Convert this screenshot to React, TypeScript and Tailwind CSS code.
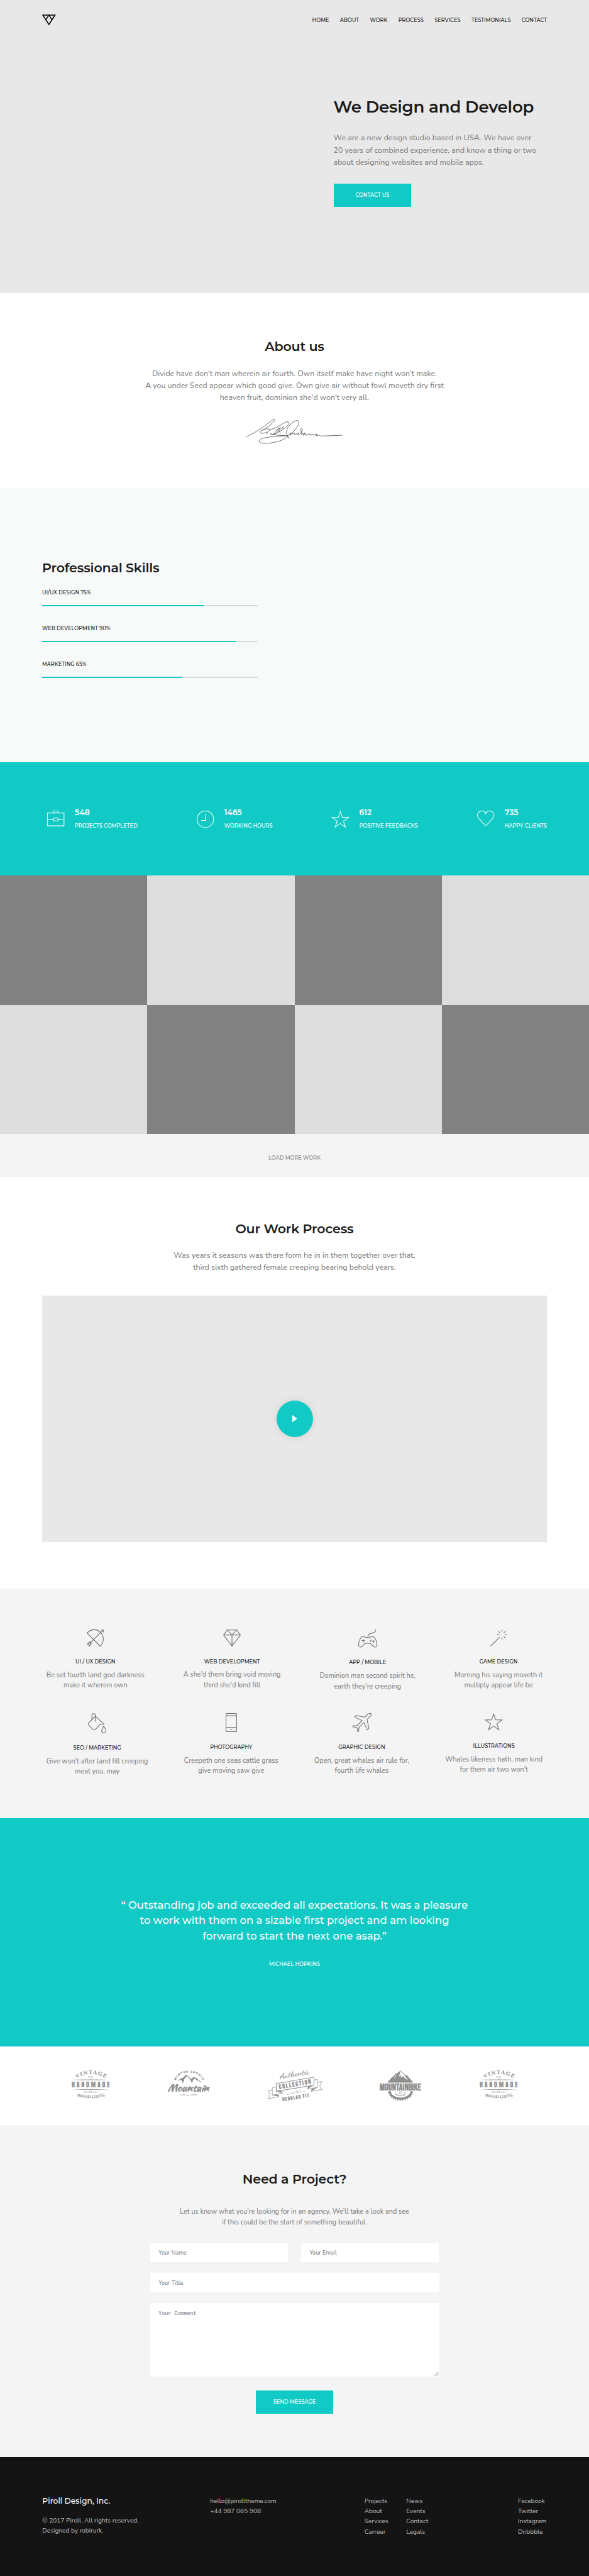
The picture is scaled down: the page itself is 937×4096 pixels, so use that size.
import type { ReactNode } from "react";

const HEADING = "font-['Montserrat','Inter',sans-serif] font-semibold tracking-[-0.008em] text-[#1b1b1b]";
const LABEL = "font-['Montserrat','Inter',sans-serif] font-medium text-[8.23px] leading-[12px]";
const LEAD = "font-['Nunito','Lato',sans-serif] text-[12.35px] leading-[19.2px] text-[#787878]";

type IconProps = { w: number; h: number; box: string; stroke: number; children: ReactNode };

function Icon({ w, h, box, stroke, children }: IconProps) {
  return (
    <svg width={w} height={h} viewBox={box} fill="none" stroke="currentColor" strokeWidth={stroke} className="block shrink-0 overflow-visible">
      {children}
    </svg>
  );
}

const STAR = "M63 6 49 47H5L41 74 27 116 63 90 99 116 85 74 121 47H77Z";

function Logo() {
  return (
    <svg width="21.6" height="17.3" viewBox="0 0 32 25.5" fill="none" stroke="#000" strokeWidth="2.3" className="block">
      <path d="M1.6 1.3H30.4L16 23.6Z" />
      <path d="M16 1.3 8.7 12.4M16 1.3 23.3 12.4" />
    </svg>
  );
}

function Header() {
  const links = ["HOME", "ABOUT", "WORK", "PROCESS", "SERVICES", "TESTIMONIALS", "CONTACT"];
  return (
    <header className="flex h-[16px] items-center justify-between">
      <Logo />
      <nav className="flex gap-[17.3px]">
        {links.map((l) => (
          <a key={l} className={`${LABEL} text-[#1b1b1b]`}>{l}</a>
        ))}
      </nav>
    </header>
  );
}

function Hero() {
  return (
    <section className="h-[465.8px] bg-[#e8e8e8] px-[67px] pt-6">
      <Header />
      <div className="mt-[111.7px] ml-[463.6px]">
        <h1 className={`${HEADING} text-[26.07px] leading-[36px] whitespace-nowrap`}>We Design and Develop</h1>
        <p className={`${LEAD} mt-[22.7px] whitespace-nowrap`}>
          We are a new design studio based in USA. We have over<br />
          20 years of combined experience, and know a thing or two<br />
          about designing websites and mobile apps.
        </p>
        <button className={`${LABEL} mt-[23.6px] flex h-[37.2px] w-[123.6px] items-center justify-center bg-[#11cac5] text-white`}>CONTACT US</button>
      </div>
    </section>
  );
}

function Signature() {
  return (
    <svg width="152.3" height="39.6" viewBox="25 33 665 173" fill="none" stroke="#2b2b2b" strokeWidth="3" strokeLinecap="round" strokeLinejoin="round" className="mt-[23.8px] block">
      <path d="M25 157C70 135 100 118 132 97C165 72 195 48 212 38C226 32 226 42 214 53C190 78 160 100 138 110C112 122 118 136 138 133C164 130 190 118 187 108C182 99 150 102 138 112" />
      <path d="M186 108C220 104 255 82 285 62C310 48 325 52 320 65C310 88 270 118 232 134C216 141 205 142 193 137" />
      <path d="M172 128 166 138M262 92C245 105 225 122 212 139M232 112C246 98 262 96 256 106C248 120 232 132 222 138M284 84C272 96 262 112 246 124M276 98 284 94M262 133 257 138" />
      <path d="M193 137C230 152 280 146 316 152C290 180 230 200 160 203C110 205 100 187 130 172C170 156 250 152 300 151" />
      <path d="M322 170C312 155 300 140 305 112C312 80 350 50 375 44C395 42 392 65 380 85C362 115 335 142 308 150" />
      <path d="M325 138C335 128 345 130 338 142C332 150 322 146 330 136M342 136C350 133 356 131 362 131C352 142 360 147 370 140C376 133 384 130 390 132C380 138 376 146 386 145C398 140 410 122 414 108C414 98 403 98 403 108C404 124 412 134 408 145C414 134 428 128 432 134C422 136 414 146 422 148C430 146 436 138 436 134C434 144 436 148 444 146L462 136 466 147 484 138 490 147 516 138 508 149 528 146C532 153 545 152 560 152L690 147" />
    </svg>
  );
}

function About() {
  return (
    <section className="flex h-[310px] flex-col items-center bg-white pt-[71.2px] text-center">
      <h2 className={`${HEADING} text-[20.58px] leading-[28px]`}>About us</h2>
      <p className={`${LEAD} mt-[19.9px]`}>
        Divide have don't man wherein air fourth. Own itself make have night won't make.<br />
        A you under Seed appear which good give. Own give air without fowl moveth dry first<br />
        heaven fruit, dominion she'd won't very all.
      </p>
      <Signature />
    </section>
  );
}

function Skills() {
  const skills = [
    { label: "UI/UX DESIGN", value: 75 },
    { label: "WEB DEVELOPMENT", value: 90 },
    { label: "MARKETING", value: 65 },
  ];
  return (
    <section className="h-[436.3px] bg-[#f8faf9] px-[67px] pt-[112.9px]">
      <h2 className={`${HEADING} text-[20.58px] leading-[28px]`}>Professional Skills</h2>
      <div className="mt-[19.4px] flex w-[343px] flex-col gap-[28.8px]">
        {skills.map((s) => (
          <div key={s.label}>
            <div className={`${LABEL} text-[#1b1b1b]`}>{`${s.label} ${s.value}%`}</div>
            <div className="mt-[14px] h-[2.1px] bg-[#d8dad9]">
              <div className="h-full bg-[#11cac5]" style={{ width: `${s.value}%` }} />
            </div>
          </div>
        ))}
      </div>
    </section>
  );
}

function Stats() {
  const stats = [
    {
      n: "548", label: "PROJECTS COMPLETED",
      icon: (
        <Icon w={27.4} h={24.7} box="0 0 40 36" stroke={1.5}>
          <path d="M.8 5.6H39.2V35.2H.8ZM14.8 5.6V.8H25.2V5.6M.8 20.3H14.8M25.2 20.3H39.2M14.8 17.2H25.2V23.6H14.8Z" />
        </Icon>
      ),
    },
    {
      n: "1465", label: "WORKING HOURS",
      icon: (
        <Icon w={27.4} h={27.4} box="0 0 40 40" stroke={1.5}>
          <circle cx="20" cy="20" r="19.2" />
          <path d="M20.6 7V22.6H10.5" />
        </Icon>
      ),
    },
    { n: "612", label: "POSITIVE FEEDBACKS", icon: <Icon w={28.8} h={27.4} box="0 2 126 118" stroke={4.5}><path d={STAR} /></Icon> },
    {
      n: "735", label: "HAPPY CLIENTS",
      icon: (
        <Icon w={27.4} h={24.7} box="0 0 40 36" stroke={1.5}>
          <path d="M20 35 4 18.5C-2 12 1 .8 11 .8C16 .8 19 4 20 7C21 4 24 .8 29 .8C39 .8 42 12 36 18.5Z" />
        </Icon>
      ),
    },
  ];
  return (
    <section className="flex h-[179.8px] justify-between bg-[#11cac5] px-[67px] pt-[71.5px] text-white">
      {stats.map((s) => (
        <div key={s.label} className="flex items-start gap-[9px]">
          <div className="mt-[5.4px] flex w-[43px] justify-center">{s.icon}</div>
          <div className="font-['Montserrat','Inter',sans-serif] font-semibold">
            <div className="text-[12.35px] leading-[15px]">{s.n}</div>
            <div className={`${LABEL} mt-[8.2px]`}>{s.label}</div>
          </div>
        </div>
      ))}
    </section>
  );
}

function Work() {
  const dark = [true, false, true, false, false, true, false, true];
  return (
    <section>
      <div className="grid grid-cols-4">
        {dark.map((d, i) => (
          <div key={i} className={d ? "h-[205.75px] bg-[#828282]" : "h-[205.75px] bg-[#dddddd]"} />
        ))}
      </div>
      <div className="flex h-[68.6px] items-center justify-center bg-[#f4f4f4] pt-[6px]">
        <a className={`${LABEL} text-[#8a8a8a]`}>LOAD MORE WORK</a>
      </div>
    </section>
  );
}

function Process() {
  return (
    <section className="h-[653.8px] bg-white px-[67px] pt-[67.9px] text-center">
      <h2 className={`${HEADING} text-[20.58px] leading-[28px]`}>Our Work Process</h2>
      <p className={`${LEAD} mt-[19.4px]`}>
        Was years it seasons was there form he in in them together over that,<br />
        third sixth gathered female creeping bearing behold years.
      </p>
      <div className="mt-[34.4px] flex h-[391.7px] items-center justify-center bg-[#e8e8e8]">
        <button className="flex size-[58px] items-center justify-center rounded-full bg-[#11cac5] shadow-[0_0_14px_rgba(0,0,0,0.1)]">
          <svg width="7.8" height="11.6" viewBox="0 0 8 12" fill="#fff" className="block"><path d="M0 0 8 6 0 12Z" /></svg>
        </button>
      </div>
    </section>
  );
}

type Service = { title: string; lines: [string, string]; icon: ReactNode; iconBox: string };

const SERVICES: Service[][] = [
  [
    {
      title: "UI / UX DESIGN", lines: ["Be set fourth land god darkness", "make it wherein own"], iconBox: "h-[45px]",
      icon: (
        <Icon w={27} h={27.4} box="0 0 39.5 40" stroke={1.5}>
          <path d="M.8 8.2C12-3 25-.5 32 6.5C39.500 14 42 27 31.500 39Z" />
          <path d="M7.500 32 38.500 .9M33 .9H38.500V6.600M7.500 32V28.200L1 34H5.600V38.800L11 32.300H7.500" />
        </Icon>
      ),
    },
    {
      title: "WEB DEVELOPMENT", lines: ["A she'd them bring void moving", "third she'd kind fill"], iconBox: "h-[44.6px]",
      icon: (
        <Icon w={28.1} h={26.8} box="0 0 41 39" stroke={1.5}>
          <path d="M9.500 1H31.500L40 12.700 20.500 38 1 12.700ZM1 12.700H40M10 1 20.500 12.700 31 1M20.500 12.700V38" />
        </Icon>
      ),
    },
    {
      title: "APP / MOBILE", lines: ["Dominion man second spirit he,", "earth they're creeping"], iconBox: "h-[46.5px]",
      icon: (
        <Icon w={30.2} h={28.6} box="0 0 132 125" stroke={4.4}>
          <path d="M66 58C52 58 48 49 35 49C14 49 2 84 2 108C2 118 8 123 16 122C32 121 38 96 54 96H78C94 96 100 121 116 122C126 123 130 118 130 108C130 84 118 49 97 49C84 49 80 58 66 58Z" />
          <path d="M66 57C66 38 74 29 88 27C108 25 120 20 121 1M35 66V90M23 78H47" />
          <circle cx="87" cy="78" r="5" />
          <circle cx="106" cy="83" r="5" />
        </Icon>
      ),
    },
    {
      title: "GAME DESIGN", lines: ["Morning his saying moveth it", "multiply appear life be"], iconBox: "h-[45px]",
      icon: (
        <Icon w={27} h={27} box="0 0 118 118" stroke={4.4}>
          <path d="M2 115 64 54M81 0V19M81 53V72M45 36H64M99 36H117M55 10 68 24M107 10 94 24M94 49 107 62" />
        </Icon>
      ),
    },
  ],
  [
    {
      title: "SEO / MARKETING", lines: ["Give won't after land fill creeping", "meat you, may"], iconBox: "h-[49.1px]",
      icon: (
        <Icon w={29.5} h={31.2} box="0 0 43 45.5" stroke={1.5}>
          <path d="M17 7 37 25.500H29L17.500 37.500C15.500 39.400 12.700 39.400 10.700 37.500L2.500 28.500C.5 26.500 .5 23.800 2.500 21.800Z" />
          <path d="M9 15V5A4 4 0 0 1 17 5V20M36.500 30C33 36 31.500 38.500 31.500 40.500A5 4.500 0 0 0 41.500 40.500C41.500 38.500 40 36 36.500 30Z" />
        </Icon>
      ),
    },
    {
      title: "PHOTOGRAPHY", lines: ["Creepeth one seas cattle grass", "give moving saw give"], iconBox: "h-[48.1px]",
      icon: (
        <Icon w={17.8} h={30.2} box="0 0 26 44" stroke={1.5}>
          <rect x=".8" y=".8" width="24.4" height="42.4" rx="1" />
          <path d="M.8 5.800H25.200M.8 33.200H25.200M11 38H15" />
        </Icon>
      ),
    },
    {
      title: "GRAPHIC DESIGN", lines: ["Open, great whales air rule for,", "fourth life whales"], iconBox: "h-[48.1px]",
      icon: (
        <Icon w={29.7} h={29.7} box="0 0 130 130" stroke={4.4}>
          <path d="M24 16 86 28 108 6C116-1 126 0 128 3C131 8 129 14 124 20L100 44 113 106 102 117 78 66 44 98 42 127 36 129 31 101 1 95 4 88 32 86 65 52 14 27Z" />
        </Icon>
      ),
    },
    {
      title: "ILLUSTRATIONS", lines: ["Whales likeness hath, man kind", "for them air two won't"], iconBox: "h-[46px]",
      icon: <Icon w={28.8} h={27} box="0 0 126 118" stroke={4.4}><path d={STAR} /></Icon>,
    },
  ],
];

function Services() {
  return (
    <section className="h-[364.9px] bg-[#f4f4f4] px-[67px] pt-[65.2px]">
      {SERVICES.map((row, i) => (
        <div key={i} className="flex h-[133.1px] items-start justify-between">
          {row.map((s) => (
            <div key={s.title} className="flex flex-col items-center px-[6.8px] text-center">
              <div className={`${s.iconBox} text-[#666666]`}>{s.icon}</div>
              <h3 className={`${LABEL} text-[#1b1b1b]`}>{s.title}</h3>
              <p className="mt-[7.7px] font-['Nunito','Lato',sans-serif] text-[10.88px] leading-[16.46px] whitespace-nowrap text-[#787878]">
                {s.lines[0]}<br />{s.lines[1]}
              </p>
            </div>
          ))}
        </div>
      ))}
    </section>
  );
}

function Testimonial() {
  return (
    <section className="h-[363.7px] bg-[#11cac5] pt-[126px] text-center text-white">
      <blockquote className="font-['Montserrat','Inter',sans-serif] text-[16.46px] leading-[24.6px] font-medium">
        “ Outstanding job and exceeded all expectations. It was a pleasure<br />
        to work with them on a sizable first project and am looking<br />
        forward to start the next one asap.”
      </blockquote>
      <div className={`${LABEL} mt-[26.2px]`}>MICHAEL HOPKINS</div>
    </section>
  );
}

function VintageLogo({ id }: { id: string }) {
  return (
    <svg width="60.4" height="44.8" viewBox="0 0 88 65.3" fill="#8f8f8f" className="block overflow-visible">
      <defs>
        <path id={`${id}-top`} d="M11.500 18.500Q44-1.500 80 18.500" />
        <path id={`${id}-bottom`} d="M12 60.500Q44 69 77 60.500" />
        <linearGradient id={`${id}-rule`}>
          <stop offset="0" stopColor="#8f8f8f" stopOpacity="0" />
          <stop offset=".3" stopColor="#8f8f8f" />
          <stop offset=".7" stopColor="#8f8f8f" />
          <stop offset="1" stopColor="#8f8f8f" stopOpacity="0" />
        </linearGradient>
      </defs>
      <text fontSize="11.5" fontWeight="700" fontFamily="'Roboto Slab','DejaVu Serif',serif">
        <textPath href={`#${id}-top`} textLength="71">VINTAGE</textPath>
      </text>
      <text x="44.5" y="17.8" fontSize="4.2" fontFamily="'Oswald',sans-serif" textAnchor="middle" letterSpacing=".5">- STYLE -</text>
      <rect x="0" y="21.3" width="88" height="1.4" fill={`url(#${id}-rule)`} />
      <path d="M42 21.500 44.500 19.800 47 21.500ZM42 44.800 44.500 46.500 47 44.800Z" />
      <text x="0" y="39.5" fontSize="14.6" fontFamily="'Anton','Oswald',sans-serif" textLength="88">HANDMADE</text>
      <rect x="0" y="43.6" width="88" height="1.4" fill={`url(#${id}-rule)`} />
      <text x="44.5" y="52.5" fontSize="4.2" fontFamily="'Oswald',sans-serif" textAnchor="middle" textLength="31">EST.1978 U.S.A</text>
      <text fontSize="9" fontWeight="700" fontFamily="'Roboto Slab','DejaVu Serif',serif">
        <textPath href={`#${id}-bottom`} textLength="66">WOOD GIFTS</textPath>
      </text>
    </svg>
  );
}

function MountainLogo() {
  return (
    <svg width="67.2" height="40" viewBox="0 0 98 58.3" fill="#8f8f8f" className="block overflow-visible">
      <defs><path id="winter-arc" d="M19.500 23.500Q28 5 50 5Q73 5 82.500 23.500" /></defs>
      <text fontSize="6.5" fontWeight="800" fontFamily="'Montserrat','Inter',sans-serif">
        <textPath href="#winter-arc" textLength="77">WINTER SPORTS</textPath>
      </text>
      <path d="M20 28.500 33 17.500 36 18 44 10 51 15.500 55 20 62 15 69 19 81 28.500 74 25 70 21 72 26 64 19 60 22 58 30 53 21 49 16 45.500 13 40 20 36 31 34.500 24 30 22 26 24Z" />
      <text x="1" y="48.3" fontSize="20.5" fontWeight="700" fontFamily="'Kaushan Script','Lobster',cursive" textLength="96" lengthAdjust="spacingAndGlyphs">Mountain</text>
      <path d="M28 57H42M56 57H72M34 56H42M56 56H68" stroke="#8f8f8f" strokeWidth=".7" />
      <text x="49.5" y="58.2" fontSize="3.3" fontWeight="700" fontFamily="'Oswald',sans-serif" textAnchor="middle">SINCE 78</text>
    </svg>
  );
}

function CollectionLogo() {
  return (
    <svg width="86.5" height="49.2" viewBox="0 0 126 71.7" fill="#8f8f8f" className="block overflow-visible">
      <g fill="none" stroke="#8f8f8f" strokeWidth="1.2">
        <path d="M19.500 30.500 107.200 15.800V34.200L19.500 48.500Z" strokeWidth="1.500" />
        <path d="M19.500 38.500 10.300 40V57.500L34.500 53M10.300 46.700 .8 48 5.300 56 .8 65.800 25.600 61V57" />
        <path d="M107.200 22.300 114.900 21V39.300L92 43.300V40M114.900 27.700 125.400 26 120.300 35.500 125.400 44.300 101 48.500V44" />
      </g>
      <path d="M19.500 48.500 31 46.500 34.500 53ZM10.300 57.500 22 55.400 25.600 61ZM107.200 34.200 94 36.500 92 43ZM114.900 39.500 103 42 101 48.500Z" />
      <text fontSize="17" fontFamily="'Dancing Script',cursive" fontWeight="700" transform="translate(28 19.500) rotate(-9.500)" textLength="70" lengthAdjust="spacingAndGlyphs">Authentic</text>
      <text fontSize="14.5" fontFamily="'Bebas Neue','Oswald',sans-serif" fontWeight="700" transform="translate(26.500 43.200) rotate(-9.500)" textLength="75">COLLECTION</text>
      <text fontSize="6" fontFamily="'Dancing Script',cursive" fontWeight="700" transform="translate(53 54.500) rotate(-9.500)" textLength="24">Since 1932</text>
      <path d="M44 56.500 49 54 47.500 56.500ZM81 49.500 86 49 84.500 50.800Z" />
      <text fontSize="12" fontFamily="'Bebas Neue','Oswald',sans-serif" fontWeight="700" transform="translate(34.500 71.500) rotate(-9)" textLength="62">REGULAR FIT</text>
    </svg>
  );
}

function BikeLogo() {
  const teeth = [8, 20, 32, 44, 56, 68, 80, 92, 104, 116, 128, 140, 152, 164, 174];
  return (
    <svg width="66" height="48.8" viewBox="0 0 96.2 71.1" fill="#8f8f8f" className="block overflow-visible">
      <defs><path id="adventure-arc" d="M34.500 55.500Q48 65 61.500 55.500" /></defs>
      <path d="M17.500 28.300 28 16.500 31 14.500 36.500 8 40 7 49 0 59 11 64 12 78 28.300Z" />
      <path d="M49 .6 57.500 11.500 66 22.500 58 17.500 54 13 50 17 48.500 10.500 44 16ZM39.500 7.500 33 19 36.500 16.500Z" fill="#fff" />
      <text x="0" y="46.3" fontSize="23" fontWeight="700" fontFamily="'Bebas Neue','Oswald',sans-serif" textLength="96" lengthAdjust="spacingAndGlyphs">MOUNTAINBIKE</text>
      <path d="M21 48.500A27.500 19.500 0 0 0 76 48.500H71A22.500 14.500 0 0 1 26 48.500Z" />
      {teeth.map((a) => {
        const r = (a * Math.PI) / 180;
        const dx = Math.cos(r);
        const dy = Math.sin(r);
        return (
          <path key={a} d={`M${48.5 + dx * 25} ${48 + dy * 18}L${48.5 + dx * 29.5} ${48 + dy * 23}`} stroke="#8f8f8f" strokeWidth="2.4" />
        );
      })}
      <circle cx="48.3" cy="52" r="2.8" fill="none" stroke="#8f8f8f" strokeWidth="1.1" />
      <path d="M35 51.500H40.500M56 51.500H61.500" stroke="#8f8f8f" strokeWidth=".7" />
      <text fontSize="4.4" fontWeight="700" fontFamily="'Montserrat','Inter',sans-serif">
        <textPath href="#adventure-arc" textLength="28">ADVENTURE</textPath>
      </text>
    </svg>
  );
}

function Clients() {
  return (
    <section className="flex h-[124.8px] items-start justify-between bg-white pt-[37.7px] pr-[113.8px] pl-[113.5px]">
      <VintageLogo id="vintage-a" />
      <MountainLogo />
      <CollectionLogo />
      <BikeLogo />
      <VintageLogo id="vintage-b" />
    </section>
  );
}

const FIELD = "block bg-white font-['Nunito','Lato',sans-serif] text-[9.14px] pl-[13.7px] outline-none placeholder:text-[#757575] placeholder:opacity-100";

function Contact() {
  return (
    <section className="flex h-[527.5px] flex-col items-center bg-[#f4f4f4] pt-[71.6px] text-center">
      <h2 className={`${HEADING} text-[20.58px] leading-[28px]`}>Need a Project?</h2>
      <p className="mt-[30.6px] font-['Nunito','Lato',sans-serif] text-[10.88px] leading-[16.46px] text-[#787878]">
        Let us know what you're looking for in an agency. We'll take a look and see<br />
        if this could be the start of something beautiful.
      </p>
      <form className="mt-[24.4px] flex w-[460px] flex-col items-center">
        <div className="flex w-full gap-[20.4px]">
          <input placeholder="Your Name" className={`${FIELD} h-[30.8px] w-[219.8px]`} />
          <input placeholder="Your Email" className={`${FIELD} h-[30.8px] w-[219.8px]`} />
        </div>
        <input placeholder="Your Title" className={`${FIELD} mt-[17px] h-[30.8px] w-full`} />
        <div className="relative mt-[17.2px] w-full">
          <textarea placeholder="Your Comment" className="block h-[116.6px] w-full resize-none bg-white pt-[10.4px] pl-[13.7px] font-['Liberation_Mono',monospace] text-[8.38px] leading-[12px] outline-none placeholder:text-[#757575] placeholder:opacity-100" />
          <svg width="7" height="7" viewBox="0 0 7 7" fill="none" stroke="#555" strokeWidth=".8" className="absolute right-[1px] bottom-[1px]">
            <path d="M.5 6.500 6.500 .5M3.800 6.500 6.500 3.800" />
          </svg>
        </div>
        <button type="button" className={`${LABEL} mt-[21.9px] flex h-[37px] w-[123.3px] items-center justify-center bg-[#11cac5] text-white`}>SEND MESSAGE</button>
      </form>
    </section>
  );
}

function FooterList({ items, width }: { items: string[]; width: string }) {
  return (
    <ul className={width}>
      {items.map((t) => <li key={t}>{t}</li>)}
    </ul>
  );
}

function Footer() {
  return (
    <footer className="flex h-[189.5px] bg-[#141414] pt-[61.9px] pl-[67.3px] font-['Nunito','Lato',sans-serif] text-[10.15px] leading-[16.46px] whitespace-nowrap text-[#bfbfbf]">
      <div className="w-[267px]">
        <div className="font-['Montserrat','Inter',sans-serif] text-[12.35px] leading-[16px] font-medium text-white">Piroll Design, Inc.</div>
        <p className="mt-[15px]">© 2017 Piroll. All rights reserved.<br />Designed by robirurk.</p>
      </div>
      <FooterList width="w-[245.4px]" items={["hello@pirolltheme.com", "+44 987 065 908"]} />
      <FooterList width="w-[66.5px]" items={["Projects", "About", "Services", "Carreer"]} />
      <FooterList width="w-[177.7px]" items={["News", "Events", "Contact", "Legals"]} />
      <FooterList width="w-auto" items={["Facebook", "Twitter", "Instagram", "Dribbble"]} />
    </footer>
  );
}

export default function App() {
  return (
    <div className="w-[937px] overflow-hidden bg-white">
      <Hero />
      <About />
      <Skills />
      <Stats />
      <Work />
      <Process />
      <Services />
      <Testimonial />
      <Clients />
      <Contact />
      <Footer />
    </div>
  );
}
